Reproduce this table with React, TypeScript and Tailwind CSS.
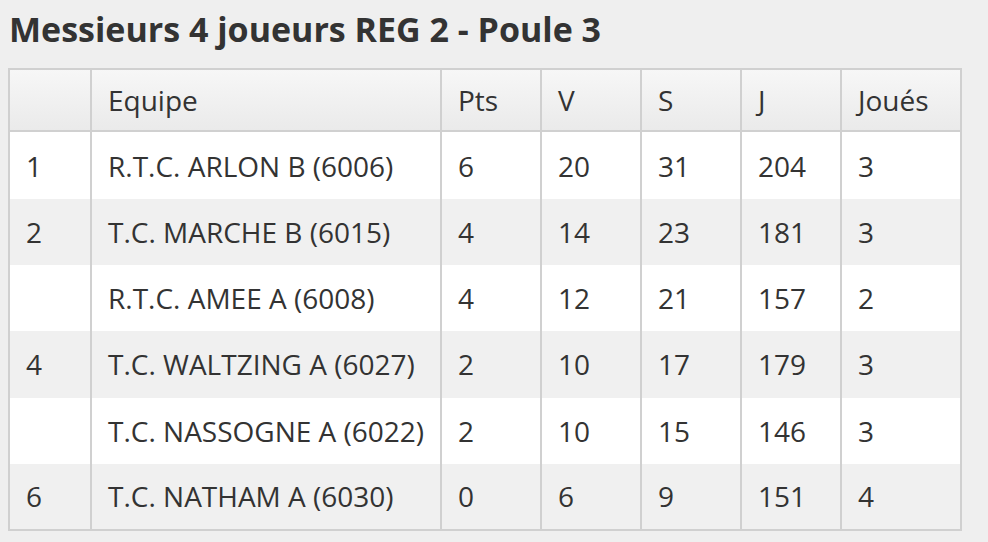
import React from 'react';

interface TeamRow {
  rank: string;
  name: string;
  pts: number;
  v: number;
  s: number;
  j: number;
  played: number;
}

const rows: TeamRow[] = [
  { rank: '1', name: 'R.T.C. ARLON B (6006)', pts: 6, v: 20, s: 31, j: 204, played: 3 },
  { rank: '2', name: 'T.C. MARCHE B (6015)', pts: 4, v: 14, s: 23, j: 181, played: 3 },
  { rank: '', name: 'R.T.C. AMEE A (6008)', pts: 4, v: 12, s: 21, j: 157, played: 2 },
  { rank: '4', name: 'T.C. WALTZING A (6027)', pts: 2, v: 10, s: 17, j: 179, played: 3 },
  { rank: '', name: 'T.C. NASSOGNE A (6022)', pts: 2, v: 10, s: 15, j: 146, played: 3 },
  { rank: '6', name: 'T.C. NATHAM A (6030)', pts: 0, v: 6, s: 9, j: 151, played: 4 },
];

const headers = ['', 'Equipe', 'Pts', 'V', 'S', 'J', 'Joués'];

export default function App() {
  return (
    <div className="min-h-[542px] bg-[#efefef] text-[#333] font-['Open_Sans',sans-serif]">
      <h1 className="pl-[9px] pt-[7px] mb-[17px] text-[34px] leading-[44px] font-bold">
        Messieurs 4 joueurs REG 2 - Poule 3
      </h1>

      <table className="ml-[8px] w-[954px] table-fixed border-collapse border-2 border-[#d0d0d0] text-[28px]">
        <colgroup>
          <col className="w-[82px]" />
          <col className="w-[350px]" />
          <col className="w-[100px]" />
          <col className="w-[100px]" />
          <col className="w-[100px]" />
          <col className="w-[100px]" />
          <col className="w-[120px]" />
        </colgroup>
        <thead>
          <tr className="h-[62px] bg-gradient-to-b from-[#f7f7f7] to-[#eaeaea]">
            {headers.map((h, i) => (
              <th
                key={i}
                className="border-2 border-[#d0d0d0] pl-[16px] pr-0 text-left font-normal"
              >
                {h}
              </th>
            ))}
          </tr>
        </thead>
        <tbody>
          {rows.map((r, idx) => (
            <tr
              key={r.name}
              className={`${idx === 0 ? 'h-[68px]' : 'h-[66.2px]'} ${idx % 2 === 0 ? 'bg-white' : 'bg-[#f0f0f0]'}`}
            >
              <td className="border-x-2 border-[#d0d0d0] pl-[16px]">{r.rank}</td>
              <td className="border-x-2 border-[#d0d0d0] pl-[16px] whitespace-nowrap">{r.name}</td>
              <td className="border-x-2 border-[#d0d0d0] pl-[16px]">{r.pts}</td>
              <td className="border-x-2 border-[#d0d0d0] pl-[16px]">{r.v}</td>
              <td className="border-x-2 border-[#d0d0d0] pl-[16px]">{r.s}</td>
              <td className="border-x-2 border-[#d0d0d0] pl-[16px]">{r.j}</td>
              <td className="border-x-2 border-[#d0d0d0] pl-[16px]">{r.played}</td>
            </tr>
          ))}
        </tbody>
      </table>
    </div>
  );
}
